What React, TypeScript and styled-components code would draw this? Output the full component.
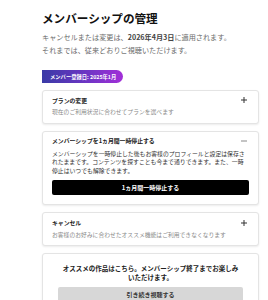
import styled, { createGlobalStyle } from "styled-components";

const GlobalStyle = createGlobalStyle`
  html, body {
    margin: 0;
    padding: 0;
    background: #fff;
  }
  body {
    font-family: "Noto Sans CJK JP", "Noto Sans", sans-serif;
    color: #222;
  }
`

const Page = styled.div`
  padding: 10px 9px 0 42px;
`

const Title = styled.h1`
  margin: 0;
  font-size: 11.6px;
  line-height: 16px;
  font-weight: 700;
  color: #111;
`

const Lead = styled.p`
  margin: 5px 0 0;
  font-size: 7.15px;
  line-height: 13px;
  color: #6b6b6b;
  white-space: nowrap;
`

const Strong = styled.span`
  font-weight: 700;
  color: #444;
`

const Badge = styled.div`
  display: inline-flex;
  align-items: center;
  margin-top: 13px;
  height: 13px;
  width: 81px;
  box-sizing: border-box;
  padding-left: 8px;
  border-radius: 0 7px 7px 0;
  background: linear-gradient(90deg, #3a3aa6 0%, #6d35c4 55%, #a22fd8 100%);
  color: #fff;
  font-size: 5.3px;
  font-weight: 700;
  white-space: nowrap;
`

const Stack = styled.div`
  display: flex;
  flex-direction: column;
  gap: 7px;
  margin-top: 6px;
`

const Card = styled.section<{ $pad?: string }>`
  border: 1px solid #e4e4e4;
  border-radius: 3px;
  background: #fff;
  box-shadow: 0 1px 2px rgba(0, 0, 0, 0.08);
  padding: ${(p) => p.$pad || "5px 9px 7px"};
`

const Head = styled.div`
  display: flex;
  align-items: center;
  justify-content: space-between;
`

const CardTitle = styled.div`
  font-size: 5.85px;
  line-height: 9px;
  font-weight: 700;
  color: #222;
`

const Desc = styled.div`
  margin-top: 2.5px;
  font-size: 5.8px;
  line-height: 9px;
  color: #8a8a8a;
  white-space: nowrap;
`

const Body = styled.div`
  margin-top: 4.75px;
  font-size: 5.85px;
  line-height: 8.5px;
  color: #333;
`

const Button = styled.button<{ $dark?: boolean; $gap?: number }>`
  display: block;
  width: 100%;
  height: 15px;
  margin-top: ${(p) => p.$gap ?? 4.75}px;
  padding: 0;
  border: none;
  border-radius: 2px;
  background: ${(p) => (p.$dark ? "#000" : "#d7d7d7")};
  color: ${(p) => (p.$dark ? "#fff" : "#333")};
  font-family: inherit;
  font-size: 6px;
  font-weight: 700;
  line-height: 15px;
`

const Promo = styled.div`
  padding: 0 4px;
  text-align: center;
  font-size: 6.5px;
  line-height: 9.5px;
  font-weight: 700;
  color: #222;
`

const ToggleIcon = styled.svg`
  flex: none;
  margin-right: 2px;
`

const Toggle = ({ open }: { open?: boolean }) => (
  <ToggleIcon width="6" height="6" viewBox="0 0 6 6">
    <rect x="0" y="2.5" width="6" height="1" fill={open ? "#8a8a8a" : "#333"} />
    {!open && <rect x="2.5" y="0" width="1" height="6" fill="#333" />}
  </ToggleIcon>
)

export default function App() {
  return (
    <Page>
      <GlobalStyle />
      <Title>メンバーシップの管理</Title>
      <Lead>
        キャンセルまたは変更は、<Strong>2026年4月3日</Strong>に適用されます。
        <br />
        それまでは、従来どおりご視聴いただけます。
      </Lead>
      <Badge>メンバー登録日: 2025年1月</Badge>
      <Stack>
        <Card>
          <Head>
            <CardTitle>プランの変更</CardTitle>
            <Toggle />
          </Head>
          <Desc>現在のご利用状況に合わせてプランを選べます</Desc>
        </Card>
        <Card $pad="4px 9px 9px">
          <Head>
            <CardTitle>メンバーシップを1ヵ月間一時停止する</CardTitle>
            <Toggle open />
          </Head>
          <Body>
            メンバーシップを一時停止した後もお客様のプロフィールと設定は保存されたままです。コンテンツを探すことも今まで通りできます。また、一時停止はいつでも解除できます。
          </Body>
          <Button $dark>1ヵ月間一時停止する</Button>
        </Card>
        <Card $pad="5px 9px 6px">
          <Head>
            <CardTitle>キャンセル</CardTitle>
            <Toggle />
          </Head>
          <Desc>お客様のお好みに合わせたオススメ機能はご利用できなくなります</Desc>
        </Card>
        <Card $pad="10px 15px 12px">
          <Promo>オススメの作品はこちら。メンバーシップ終了までお楽しみいただけます。</Promo>
          <Button $gap={4}>引き続き視聴する</Button>
        </Card>
      </Stack>
    </Page>
  )
}
